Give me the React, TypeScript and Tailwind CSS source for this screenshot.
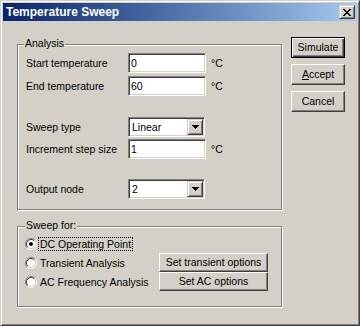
import React from "react";

function Raised({ children, className }: { children?: React.ReactNode; className: string }) {
  return (
    <div
      className={
        "flex items-center justify-center bg-[#d4d0c8] border border-t-white border-l-white border-b-[#404040] border-r-[#404040] shadow-[inset_-1px_-1px_0_#808080] " +
        className
      }
    >
      {children}
    </div>
  );
}

function Field({ value }: { value: string }) {
  return (
    <div className="w-[78px] h-[20px] bg-white border border-t-[#808080] border-l-[#808080] border-b-white border-r-white shadow-[inset_1px_1px_0_#404040,inset_-1px_-1px_0_#d4d0c8] flex items-center pl-[2px]">
      {value}
    </div>
  );
}

function Arrow() {
  return (
    <svg width="7" height="4" viewBox="0 0 7 4" shapeRendering="crispEdges">
      <rect x="0" y="0" width="7" height="1" fill="#000" />
      <rect x="1" y="1" width="5" height="1" fill="#000" />
      <rect x="2" y="2" width="3" height="1" fill="#000" />
      <rect x="3" y="3" width="1" height="1" fill="#000" />
    </svg>
  );
}

function Combo({ value }: { value: string }) {
  return (
    <div className="w-[77px] h-[20px] bg-white border border-t-[#808080] border-l-[#808080] border-b-white border-r-white shadow-[inset_1px_1px_0_#404040,inset_-1px_-1px_0_#d4d0c8] flex items-center p-[1px]">
      <div className="flex-1 pl-[2px]">{value}</div>
      <div className="w-[16px] h-[16px] bg-[#d4d0c8] border border-t-[#d4d0c8] border-l-[#d4d0c8] border-b-[#404040] border-r-[#404040] shadow-[inset_1px_1px_0_#fff,inset_-1px_-1px_0_#808080] flex items-center justify-center">
        <Arrow />
      </div>
    </div>
  );
}

function Radio({ checked }: { checked?: boolean }) {
  return (
    <svg width="12" height="12" viewBox="0 0 12 12" className="shrink-0">
      <circle cx="6" cy="6" r="4.5" fill="#fff" />
      <path d="M2.11 9.89 A5.5 5.5 0 0 1 9.89 2.11" stroke="#808080" strokeWidth="1" fill="none" />
      <path d="M9.89 2.11 A5.5 5.5 0 0 1 2.11 9.89" stroke="#ffffff" strokeWidth="1" fill="none" />
      <path d="M2.82 9.18 A4.5 4.5 0 0 1 9.18 2.82" stroke="#404040" strokeWidth="1" fill="none" />
      <path d="M9.18 2.82 A4.5 4.5 0 0 1 2.82 9.18" stroke="#d4d0c8" strokeWidth="1" fill="none" />
      {checked && <circle cx="6" cy="6" r="2" fill="#000" />}
    </svg>
  );
}

function Row({ label, children, className }: { label: string; children: React.ReactNode; className: string }) {
  return (
    <div className={"flex items-center h-[20px] " + className}>
      <div className="w-[102px]">{label}</div>
      {children}
    </div>
  );
}

export default function App() {
  return (
    <div className="w-[360px] h-[326px] bg-[#d4d0c8] border border-t-[#d4d0c8] border-l-[#d4d0c8] border-b-[#404040] border-r-[#404040] shadow-[inset_1px_1px_0_#fff,inset_-1px_-1px_0_#808080] p-[2px] font-['Liberation_Sans',Arial,sans-serif] text-[10.5px] leading-[13px] text-black overflow-hidden">
      {/* Title bar */}
      <div className="h-[18px] flex items-center bg-linear-to-r from-[#0a246a] to-[#a6caf0]">
        <div className="pl-[3px] text-white font-bold text-[12px] leading-[14px]">Temperature Sweep</div>
        <div className="ml-auto mr-[2px] w-[16px] h-[14px] bg-[#d4d0c8] border border-t-[#d4d0c8] border-l-[#d4d0c8] border-b-[#404040] border-r-[#404040] shadow-[inset_1px_1px_0_#fff,inset_-1px_-1px_0_#808080] flex items-center justify-center">
          <svg width="8" height="7" viewBox="0 0 8 7" shapeRendering="crispEdges">
            <rect x="0" y="0" width="2" height="1" fill="#000" />
            <rect x="6" y="0" width="2" height="1" fill="#000" />
            <rect x="1" y="1" width="2" height="1" fill="#000" />
            <rect x="5" y="1" width="2" height="1" fill="#000" />
            <rect x="2" y="2" width="4" height="1" fill="#000" />
            <rect x="3" y="3" width="2" height="1" fill="#000" />
            <rect x="2" y="4" width="4" height="1" fill="#000" />
            <rect x="1" y="5" width="2" height="1" fill="#000" />
            <rect x="5" y="5" width="2" height="1" fill="#000" />
            <rect x="0" y="6" width="2" height="1" fill="#000" />
            <rect x="6" y="6" width="2" height="1" fill="#000" />
          </svg>
        </div>
      </div>

      {/* Body */}
      <div className="mt-[1px] flex">
        <div className="pl-[14px] pt-[22px] flex flex-col">
          {/* Analysis group */}
          <div className="relative w-[265px] h-[166px] border border-[#808080] shadow-[1px_1px_0_#fff,inset_1px_1px_0_#fff] pl-[8px] pt-[8px] flex flex-col">
            <span className="absolute left-[6px] top-[-8px] px-[1px] bg-[#d4d0c8]">Analysis</span>
            <Row label="Start temperature" className="">
              <Field value="0" />
              <span className="ml-[5px]">°C</span>
            </Row>
            <Row label="End temperature" className="mt-[3px]">
              <Field value="60" />
              <span className="ml-[5px]">°C</span>
            </Row>
            <Row label="Sweep type" className="mt-[21px]">
              <Combo value="Linear" />
            </Row>
            <Row label="Increment step size" className="mt-[2px]">
              <Field value="1" />
              <span className="ml-[5px]">°C</span>
            </Row>
            <Row label="Output node" className="mt-[20px]">
              <Combo value="2" />
            </Row>
          </div>

          {/* Sweep for group */}
          <div className="relative mt-[16px] w-[265px] h-[81px] border border-[#808080] shadow-[1px_1px_0_#fff,inset_1px_1px_0_#fff] pl-[7px] pt-[7px] flex flex-col">
            <span className="absolute left-[7px] top-[-8px] px-[1px] bg-[#d4d0c8]">Sweep for:</span>
            <div className="flex items-center h-[19px]">
              <div className="w-[134px] flex items-center">
                <Radio checked />
                <span className="ml-[1px] px-[1px] border border-dotted border-black leading-[12px]">DC Operating Point</span>
              </div>
            </div>
            <div className="flex items-center h-[19px]">
              <div className="w-[134px] flex items-center">
                <Radio />
                <span className="ml-[1px] px-[1px] border border-transparent leading-[12px]">Transient Analysis</span>
              </div>
              <Raised className="w-[109px] h-[19px]">Set transient options</Raised>
            </div>
            <div className="flex items-center h-[19px]">
              <div className="w-[134px] flex items-center">
                <Radio />
                <span className="ml-[1px] px-[1px] border border-transparent leading-[12px]">AC Frequency Analysis</span>
              </div>
              <Raised className="w-[109px] h-[19px]">Set AC options</Raised>
            </div>
          </div>
        </div>

        {/* Buttons */}
        <div className="ml-[9px] pt-[15px] flex flex-col gap-[6px]">
          <div className="w-[54px] h-[21px] bg-[#d4d0c8] border border-black shadow-[inset_1px_1px_0_#fff,inset_-1px_-1px_0_#404040,inset_-2px_-2px_0_#808080] flex items-center justify-center">
            Simulate
          </div>
          <Raised className="w-[54px] h-[21px]">
            <span>
              <span className="underline">A</span>ccept
            </span>
          </Raised>
          <Raised className="w-[54px] h-[21px]">Cancel</Raised>
        </div>
      </div>
    </div>
  );
}
